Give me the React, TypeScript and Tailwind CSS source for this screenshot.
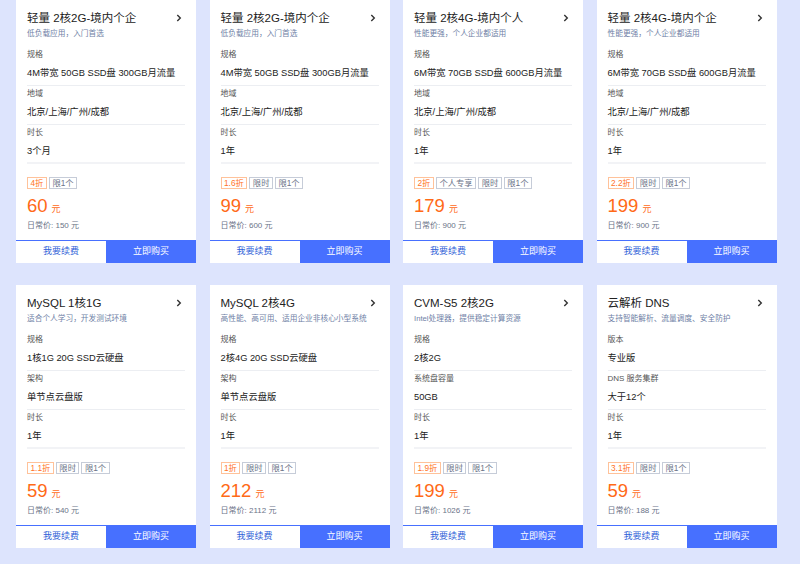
type Spec = { label: string; value: string };

type Product = {
  title: string;
  desc: string;
  specs: Spec[];
  discount: string;
  tags: string[];
  price: string;
  regular: string;
};

const products: Product[] = [
  {
    title: '轻量 2核2G-境内个企',
    desc: '低负载应用，入门首选',
    specs: [
      { label: '规格', value: '4M带宽 50GB SSD盘 300GB月流量' },
      { label: '地域', value: '北京/上海/广州/成都' },
      { label: '时长', value: '3个月' },
    ],
    discount: '4折',
    tags: ['限1个'],
    price: '60',
    regular: '150',
  },
  {
    title: '轻量 2核2G-境内个企',
    desc: '低负载应用，入门首选',
    specs: [
      { label: '规格', value: '4M带宽 50GB SSD盘 300GB月流量' },
      { label: '地域', value: '北京/上海/广州/成都' },
      { label: '时长', value: '1年' },
    ],
    discount: '1.6折',
    tags: ['限时', '限1个'],
    price: '99',
    regular: '600',
  },
  {
    title: '轻量 2核4G-境内个人',
    desc: '性能更强，个人企业都适用',
    specs: [
      { label: '规格', value: '6M带宽 70GB SSD盘 600GB月流量' },
      { label: '地域', value: '北京/上海/广州/成都' },
      { label: '时长', value: '1年' },
    ],
    discount: '2折',
    tags: ['个人专享', '限时', '限1个'],
    price: '179',
    regular: '900',
  },
  {
    title: '轻量 2核4G-境内个企',
    desc: '性能更强，个人企业都适用',
    specs: [
      { label: '规格', value: '6M带宽 70GB SSD盘 600GB月流量' },
      { label: '地域', value: '北京/上海/广州/成都' },
      { label: '时长', value: '1年' },
    ],
    discount: '2.2折',
    tags: ['限时', '限1个'],
    price: '199',
    regular: '900',
  },
  {
    title: 'MySQL 1核1G',
    desc: '适合个人学习，开发测试环境',
    specs: [
      { label: '规格', value: '1核1G 20G SSD云硬盘' },
      { label: '架构', value: '单节点云盘版' },
      { label: '时长', value: '1年' },
    ],
    discount: '1.1折',
    tags: ['限时', '限1个'],
    price: '59',
    regular: '540',
  },
  {
    title: 'MySQL 2核4G',
    desc: '高性能、高可用、适用企业非核心小型系统',
    specs: [
      { label: '规格', value: '2核4G 20G SSD云硬盘' },
      { label: '架构', value: '单节点云盘版' },
      { label: '时长', value: '1年' },
    ],
    discount: '1折',
    tags: ['限时', '限1个'],
    price: '212',
    regular: '2112',
  },
  {
    title: 'CVM-S5 2核2G',
    desc: 'Intel处理器，提供稳定计算资源',
    specs: [
      { label: '规格', value: '2核2G' },
      { label: '系统盘容量', value: '50GB' },
      { label: '时长', value: '1年' },
    ],
    discount: '1.9折',
    tags: ['限时', '限1个'],
    price: '199',
    regular: '1026',
  },
  {
    title: '云解析 DNS',
    desc: '支持智能解析、流量调度、安全防护',
    specs: [
      { label: '版本', value: '专业版' },
      { label: 'DNS 服务集群', value: '大于12个' },
      { label: '时长', value: '1年' },
    ],
    discount: '3.1折',
    tags: ['限时', '限1个'],
    price: '59',
    regular: '188',
  },
];

const Chevron = () => (
  <svg width="6" height="8" viewBox="0 0 6 8" className="mr-[3px] shrink-0">
    <path d="M1.3 1 L4.3 4 L1.3 7" fill="none" stroke="#333" strokeWidth="1.4" />
  </svg>
);

const ProductCard = ({ p }: { p: Product }) => (
  <div className="flex h-[263px] w-[180px] flex-col bg-white">
    <div className="flex-1 px-[11px] pt-[10px]">
      {/* Header */}
      <div className="flex h-[16px] items-center justify-between">
        <span className="whitespace-nowrap text-[11.5px] leading-[16px] text-[#222]">
          {p.title}
        </span>
        <Chevron />
      </div>
      <p className="mt-[2px] h-[12px] whitespace-nowrap text-[7.7px] leading-[12px] text-[#6f7fa6]">
        {p.desc}
      </p>

      {/* Specs */}
      <div className="mt-[7px]">
        {p.specs.map((s, i) => (
          <div
            key={s.label}
            className={
              i === p.specs.length - 1
                ? 'border-b-2 border-[#f2f3f6] pb-[4px] pt-[2px]'
                : 'border-b border-[#eceef2] pb-[5px] pt-[2px]'
            }
          >
            <p className="h-[12px] text-[8px] leading-[12px] text-[#555]">{s.label}</p>
            <p className="mt-[5px] h-[14px] whitespace-nowrap text-[9.3px] leading-[14px] text-[#222]">
              {s.value}
            </p>
          </div>
        ))}
      </div>

      {/* Tags */}
      <div className="mt-[13px] flex gap-[2px]">
        <span className="flex h-[12px] items-center border border-[#ffc29a] px-[2.5px] text-[8.3px] leading-none text-[#ff7428]">
          {p.discount}
        </span>
        {p.tags.map((t) => (
          <span
            key={t}
            className="flex h-[12px] items-center border border-[#c6ccd8] px-[2.5px] text-[8.3px] leading-none text-[#6b7488]"
          >
            {t}
          </span>
        ))}
      </div>

      {/* Price */}
      <div className="mt-[7px] flex h-[20px] items-baseline">
        <span className="text-[18.5px] leading-[20px] text-[#ff6a17]">{p.price}</span>
        <span className="ml-[4px] text-[9px] text-[#ff6a17]">元</span>
      </div>
      <p className="mt-[4px] h-[12px] text-[8px] leading-[12px] text-[#6b7488]">
        日常价: {p.regular} 元
      </p>
    </div>

    {/* Buttons */}
    <div className="flex h-[23px]">
      <button className="flex w-1/2 items-center justify-center border-t border-[#4770ff] bg-white text-[9px] text-[#2f5fd8]">
        我要续费
      </button>
      <button className="flex w-1/2 items-center justify-center bg-[#4770ff] text-[9px] text-white">
        立即购买
      </button>
    </div>
  </div>
);

export default function App() {
  return (
    <div className="h-[564px] w-[800px] overflow-hidden bg-[#dde4fd] pl-[16px] font-['Liberation_Sans','Noto_Sans_CJK_SC',sans-serif]">
      <div className="grid grid-cols-[repeat(4,180px)] gap-x-[13.5px] gap-y-[22px]">
        {products.map((p, i) => (
          <ProductCard key={i} p={p} />
        ))}
      </div>
    </div>
  );
}
